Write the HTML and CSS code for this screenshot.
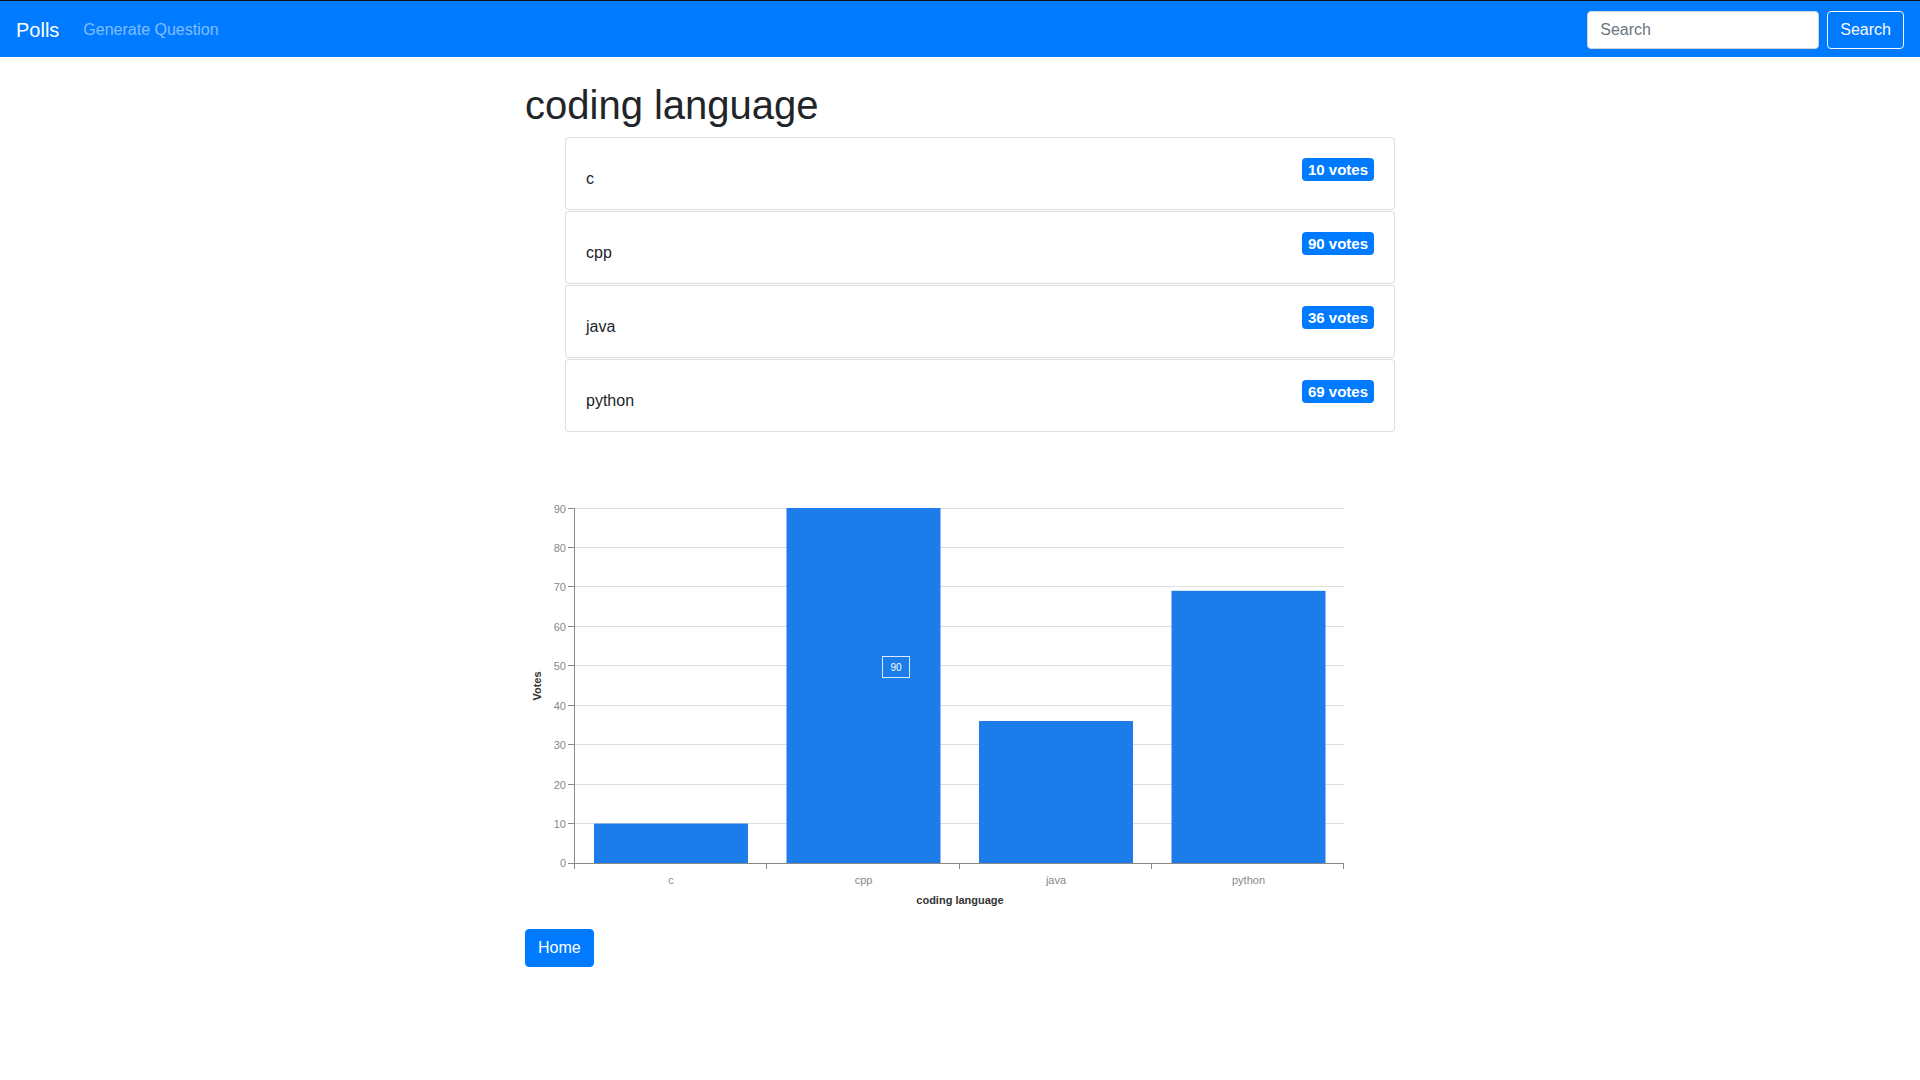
FILE: index.html
```html
<!DOCTYPE html>
<html lang="en">
<head>
<meta charset="utf-8">
<title>Polls</title>
<link rel="stylesheet" href="styles.css">
</head>
<body>
<nav class="navbar">
  <div class="nav-left">
    <a class="brand" href="#">Polls</a>
    <a class="nav-link" href="#">Generate Question</a>
  </div>
  <form class="search-form">
    <input class="search-input" type="search" placeholder="Search">
    <button class="btn-outline" type="button">Search</button>
  </form>
</nav>

<main class="content">
  <h1 class="title">coding language</h1>
  <ul class="choices">
    <li class="choice"><span class="choice-text">c</span><span class="badge">10 votes</span></li>
    <li class="choice"><span class="choice-text">cpp</span><span class="badge">90 votes</span></li>
    <li class="choice"><span class="choice-text">java</span><span class="badge">36 votes</span></li>
    <li class="choice"><span class="choice-text">python</span><span class="badge">69 votes</span></li>
  </ul>

  <svg class="chart" width="870" height="445" viewBox="0 0 870 445" xmlns="http://www.w3.org/2000/svg">
    <g class="grid" stroke="#dddddd" stroke-width="1">
      <line x1="49" y1="353.5" x2="819" y2="353.5"/>
      <line x1="49" y1="314.5" x2="819" y2="314.5"/>
      <line x1="49" y1="274.5" x2="819" y2="274.5"/>
      <line x1="49" y1="235.5" x2="819" y2="235.5"/>
      <line x1="49" y1="195.5" x2="819" y2="195.5"/>
      <line x1="49" y1="156.5" x2="819" y2="156.5"/>
      <line x1="49" y1="116.5" x2="819" y2="116.5"/>
      <line x1="49" y1="77.5" x2="819" y2="77.5"/>
      <line x1="49" y1="38.5" x2="819" y2="38.5"/>
    </g>
    <g class="bars" fill="#1c7ce9">
      <rect x="69" y="353.56" width="154" height="39.44"/>
      <rect x="261.5" y="38" width="154" height="355"/>
      <rect x="454" y="251" width="154" height="142"/>
      <rect x="646.5" y="120.8" width="154" height="272.2"/>
    </g>
    <rect x="357.5" y="186.5" width="27" height="21" fill="none" stroke="#ffffff" stroke-opacity="0.85" stroke-width="1"/>
    <text x="371" y="197" class="bar-label" text-anchor="middle" dominant-baseline="central">90</text>
    <g class="axis" stroke="#888888" stroke-width="1">
      <line x1="49.5" y1="38" x2="49.5" y2="394"/>
      <line x1="49" y1="393.5" x2="819" y2="393.5"/>
      <line x1="43" y1="393.5" x2="49" y2="393.5"/>
      <line x1="43" y1="353.5" x2="49" y2="353.5"/>
      <line x1="43" y1="314.5" x2="49" y2="314.5"/>
      <line x1="43" y1="274.5" x2="49" y2="274.5"/>
      <line x1="43" y1="235.5" x2="49" y2="235.5"/>
      <line x1="43" y1="195.5" x2="49" y2="195.5"/>
      <line x1="43" y1="156.5" x2="49" y2="156.5"/>
      <line x1="43" y1="116.5" x2="49" y2="116.5"/>
      <line x1="43" y1="77.5" x2="49" y2="77.5"/>
      <line x1="43" y1="38.5" x2="49" y2="38.5"/>
      <line x1="49.5" y1="393" x2="49.5" y2="399"/>
      <line x1="241.5" y1="393" x2="241.5" y2="399"/>
      <line x1="434.5" y1="393" x2="434.5" y2="399"/>
      <line x1="626.5" y1="393" x2="626.5" y2="399"/>
      <line x1="818.5" y1="393" x2="818.5" y2="399"/>
    </g>
    <g class="tick-labels" text-anchor="end" dominant-baseline="central">
      <text x="41" y="393">0</text>
      <text x="41" y="353.5">10</text>
      <text x="41" y="314.5">20</text>
      <text x="41" y="274.5">30</text>
      <text x="41" y="235.5">40</text>
      <text x="41" y="195.5">50</text>
      <text x="41" y="156.5">60</text>
      <text x="41" y="116.5">70</text>
      <text x="41" y="77.5">80</text>
      <text x="41" y="38.5">90</text>
    </g>
    <g class="tick-labels" text-anchor="middle" dominant-baseline="central">
      <text x="146" y="409.5">c</text>
      <text x="338.5" y="409.5">cpp</text>
      <text x="531" y="409.5">java</text>
      <text x="723.5" y="409.5">python</text>
    </g>
    <text class="axis-title" x="435" y="430" text-anchor="middle" dominant-baseline="central">coding language</text>
    <text class="axis-title" x="0" y="0" text-anchor="middle" dominant-baseline="central" transform="translate(12 216) rotate(-90)">Votes</text>
  </svg>

  <a class="btn-primary" href="#">Home</a>
</main>
</body>
</html>
```

FILE: styles.css
```css
* {
  box-sizing: border-box;
}

body {
  margin: 0;
  font-family: "Liberation Sans", Arial, sans-serif;
  font-size: 16px;
  line-height: 1.5;
  color: #212529;
  background: #ffffff;
}

a {
  text-decoration: none;
}

.navbar {
  display: flex;
  align-items: center;
  justify-content: space-between;
  height: 57px;
  padding: 1px 16px 0;
  background: #007bff;
  border-top: 1px solid #111111;
}

.nav-left {
  display: flex;
  align-items: center;
}

.brand {
  font-size: 20px;
  line-height: 30px;
  padding: 5px 0;
  margin-right: 16px;
  color: #ffffff;
}

.nav-link {
  padding: 8px;
  color: rgba(255, 255, 255, 0.5);
  font-size: 16px;
}

.search-form {
  display: flex;
  align-items: center;
}

.search-input {
  width: 232px;
  height: 38px;
  padding: 6px 12px;
  margin-right: 8px;
  font-family: inherit;
  font-size: 16px;
  color: #495057;
  background: #ffffff;
  border: 1px solid #ced4da;
  border-radius: 4px;
  outline: none;
}

.search-input::placeholder {
  color: #6c757d;
}

.btn-outline {
  height: 38px;
  padding: 6px 12px;
  font-family: inherit;
  font-size: 16px;
  line-height: 1.5;
  color: #f8f9fa;
  background: transparent;
  border: 1px solid #f8f9fa;
  border-radius: 4px;
}

.content {
  width: 870px;
  margin: 0 auto;
  padding-top: 24px;
}

.title {
  margin: 0 0 8px;
  font-size: 40px;
  line-height: 1.2;
  font-weight: 500;
}

.choices {
  margin: 0;
  padding-left: 40px;
  list-style: none;
}

.choice {
  display: flex;
  justify-content: space-between;
  align-items: flex-start;
  height: 73px;
  margin-bottom: 1px;
  padding: 20px 16px 0 20px;
  border: 1px solid rgba(0, 0, 0, 0.125);
  border-radius: 4px;
  background: #ffffff;
}

.choice:last-child {
  margin-bottom: 0;
}

.choice-text {
  padding-top: 9px;
  line-height: 24px;
  font-size: 16px;
}

.badge {
  display: inline-block;
  margin-right: 4px;
  padding: 3.75px 6px;
  font-size: 15px;
  font-weight: 700;
  line-height: 1;
  color: #ffffff;
  background: #007bff;
  border-radius: 4px;
}

.chart {
  display: block;
  margin-top: 38px;
  font-family: "Liberation Sans", Arial, sans-serif;
}

.tick-labels {
  font-size: 11px;
  fill: #888888;
}

.axis-title {
  font-size: 11px;
  font-weight: 700;
  fill: #333333;
}

.bar-label {
  font-size: 10px;
  fill: #ffffff;
}

.btn-primary {
  display: inline-block;
  margin-top: 14px;
  padding: 6px 12px;
  font-size: 16px;
  line-height: 1.5;
  color: #ffffff;
  background: #007bff;
  border: 1px solid #007bff;
  border-radius: 4px;
}
```
